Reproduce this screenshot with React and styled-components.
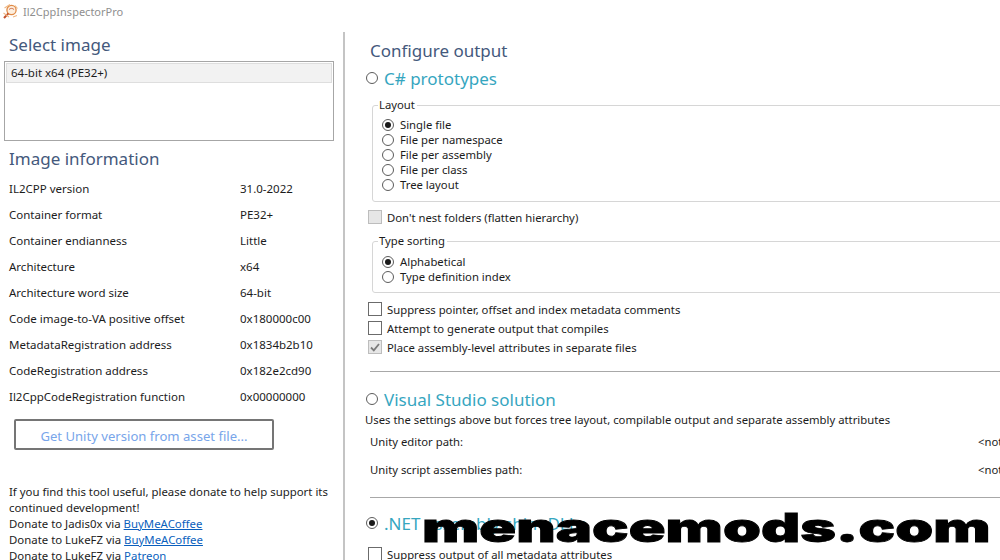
import React from "react";
import styled, { createGlobalStyle } from "styled-components";

const Global = createGlobalStyle`
  html, body { margin: 0; padding: 0; background: #fff; overflow: hidden; }
  * { box-sizing: border-box; }
  #root { width: 1000px; height: 560px; overflow: hidden; position: relative; }
`;

const Window = styled.div`
  width: 1000px; height: 560px; overflow: hidden; position: relative;
  font-family: "Noto Sans", "Open Sans", sans-serif; font-size: 11.3px; color: #1c1c1c; background: #fff;
`;
const TitleBar = styled.div`
  height: 22px; display: flex; align-items: center; gap: 4px; padding-left: 2px;
  color: #8f8f8f; font-size: 11px; white-space: nowrap;
`;
const Main = styled.div`display: flex; align-items: flex-start; height: 528px; margin-top: 10px;`;
const LeftPane = styled.div`
  flex: 0 0 345px; height: 528px; border-right: 2px solid #c4c4c4; overflow: hidden; padding-top: 1px; font-size: 11.5px;
`;
const RightPane = styled.div`flex: 0 0 800px; padding: 7px 0 0 21px; height: 528px; overflow: hidden;`;
const Heading = styled.div`
  height: 24px; line-height: 23px; font-size: 17px; color: #44597c; margin-left: ${p => p.$indent}px; margin-top: ${p => p.$top || 0}px;
`;
const ListBox = styled.div`
  margin: 4px 0 0 4px; width: 330px; height: 80px; border: 1px solid #a6a6a6; padding: 1px;
`;
const ListItem = styled.div`
  height: 20px; line-height: 18px; background: #f2f2f2; border: 1px solid #dedede; padding-left: 4px;
`;
const InfoTable = styled.div`
  margin: 4px 0 1px 9px; display: grid; grid-template-columns: 231px 1fr; grid-auto-rows: 26px; align-items: center;
`;
const AssetButton = styled.div`
  margin: 10px 0 0 14px; width: 260px; height: 31px; border: 2px solid #757575; border-radius: 2px; padding-top: 2px;
  display: flex; align-items: center; justify-content: center; color: #78a5ea; font-size: 13.1px;
`;
const Donate = styled.div`margin: 34px 0 0 9px; line-height: 16px; width: 325px; font-size: 11.4px;`;
const DonateLink = styled.span`color: #0a5fbd; text-decoration: underline;`;
const OptionRow = styled.div`
  display: flex; align-items: center; gap: 6px; height: 24px; margin: ${p => p.$top || 0}px 0 0 0; 
`;
const OptionTitle = styled.span`font-size: 17px; line-height: 23px; color: #36a6bf; white-space: nowrap;`;
const Circle = styled.span`
  flex: none; width: 12px; height: 12px; border-radius: 50%; border: 1px solid #5c5c5c; background: #fff;
  display: flex; align-items: center; justify-content: center;
  &::after { content: ""; width: 6px; height: 6px; border-radius: 50%; background: ${p => p.$on ? "#1a1a1a" : "transparent"}; }
`;
const Group = styled.fieldset`
  margin: ${p => p.$top}px 0 0 6px; width: 760px; border: 1px solid #d6d6d6; border-radius: 3px;
  padding: ${p => p.$inset}px 0 ${p => 13 - p.$inset}px 9px; min-width: 0;
`;
const GroupTitle = styled.legend`padding: 0 2px 0 1px; height: 16px; line-height: 16px; margin-left: -4px;`;
const RadioRow = styled.div`display: flex; align-items: center; gap: 6px; height: 15px;`;
const CheckRow = styled.div`
  display: flex; align-items: center; gap: 5px; height: 16px; margin: ${p => p.$top}px 0 0 2px; white-space: nowrap;
`;
const Box = styled.span`
  flex: none; width: 14px; height: 14px; border: 1px solid ${p => p.$off ? "#bdbdbd" : "#6b6b6b"};
  background: ${p => p.$off ? "#e6e6e6" : "#fff"}; display: flex; align-items: center; justify-content: center;
`;
const Rule = styled.div`height: 1px; background: #a8a8a8; margin: ${p => p.$top}px 0 0 4px; width: 700px;`;
const Note = styled.div`height: 16px; line-height: 16px; padding-top: 1px; white-space: nowrap; margin-left: -1px;`;
const PathRow = styled.div`
  display: grid; grid-template-columns: 608px 1fr; height: 28px; align-items: center; padding-left: 4px; white-space: nowrap;
`;
const Watermark = styled.div`
  position: absolute; left: 422px; top: 504px; font-family: Inter, "DejaVu Sans", sans-serif; font-weight: 900; font-size: 40px; line-height: 48px;
  color: #000; -webkit-text-stroke: 0.8px #000; white-space: nowrap; transform: scaleX(1.52); transform-origin: left top;
`;

const AppIcon = () => (
  <svg width="17" height="17" viewBox="0 0 17 17" fill="none">
    <circle cx="9.5" cy="7" r="4.6" stroke="#e08a45" strokeWidth="1.3" fill="#fdeedd" />
    <path d="M6.4 10.4 2 15" stroke="#c2512d" strokeWidth="2" />
    <path d="M2.5 5 8 1.5M1.5 10 7 14M11 14l4-1.5M13 2.5l2.5 3" stroke="#efb885" strokeWidth="1.1" />
    <path d="M7 6.5c1.5-1.5 3.5-1.5 5 0" stroke="#c2512d" strokeWidth="0.8" />
  </svg>
);
const Tick = () => (
  <svg width="12" height="12" viewBox="0 0 12 12" fill="none">
    <path d="M2 6.5 4.8 9.3 10 3" stroke="#7a7a7a" strokeWidth="1.8" />
  </svg>
);

const info = [
  ["IL2CPP version", "31.0-2022"],
  ["Container format", "PE32+"],
  ["Container endianness", "Little"],
  ["Architecture", "x64"],
  ["Architecture word size", "64-bit"],
  ["Code image-to-VA positive offset", "0x180000c00"],
  ["MetadataRegistration address", "0x1834b2b10"],
  ["CodeRegistration address", "0x182e2cd90"],
  ["Il2CppCodeRegistration function", "0x00000000"],
];
const Radio = ({ on, children }) => (
  <RadioRow><Circle $on={on} /><span>{children}</span></RadioRow>
);
const Check = ({ top, off, on, children }) => (
  <CheckRow $top={top}><Box $off={off}>{on && <Tick />}</Box><span>{children}</span></CheckRow>
);

export default function App() {
  return (
    <Window>
      <Global />
      <TitleBar><AppIcon /><span>Il2CppInspectorPro</span></TitleBar>
      <Main>
        <LeftPane>
          <Heading $indent={9}>Select image</Heading>
          <ListBox><ListItem>64-bit x64 (PE32+)</ListItem></ListBox>
          <Heading $indent={9} $top={6}>Image information</Heading>
          <InfoTable>
            {info.map(([k, v]) => (
              <React.Fragment key={k}><span>{k}</span><span>{v}</span></React.Fragment>
            ))}
          </InfoTable>
          <AssetButton>Get Unity version from asset file...</AssetButton>
          <Donate>
            If you find this tool useful, please donate to help support its continued development!<br />
            Donate to Jadis0x via <DonateLink>BuyMeACoffee</DonateLink><br />
            Donate to LukeFZ via <DonateLink>BuyMeACoffee</DonateLink><br />
            Donate to LukeFZ via <DonateLink>Patreon</DonateLink>
          </Donate>
        </LeftPane>
        <RightPane>
          <Heading $indent={4}>Configure output</Heading>
          <OptionRow $top={3}><Circle /><OptionTitle>C# prototypes</OptionTitle></OptionRow>
          <Group $top={7} $inset={4}>
            <GroupTitle>Layout</GroupTitle>
            <Radio on>Single file</Radio>
            <Radio>File per namespace</Radio>
            <Radio>File per assembly</Radio>
            <Radio>File per class</Radio>
            <Radio>Tree layout</Radio>
          </Group>
          <Check top={7} off>Don't nest folders (flatten hierarchy)</Check>
          <Group $top={8} $inset={5}>
            <GroupTitle>Type sorting</GroupTitle>
            <Radio on>Alphabetical</Radio>
            <Radio>Type definition index</Radio>
          </Group>
          <Check top={8}>Suppress pointer, offset and index metadata comments</Check>
          <Check top={3}>Attempt to generate output that compiles</Check>
          <Check top={3} off on>Place assembly-level attributes in separate files</Check>
          <Rule $top={16} />
          <OptionRow $top={15}><Circle /><OptionTitle>Visual Studio solution</OptionTitle></OptionRow>
          <Note>Uses the settings above but forces tree layout, compilable output and separate assembly attributes</Note>
          <PathRow><span>Unity editor path:</span><span>&lt;not set&gt;</span></PathRow>
          <PathRow><span>Unity script assemblies path:</span><span>&lt;not set&gt;</span></PathRow>
          <Rule $top={14} />
          <OptionRow $top={13}><Circle $on /><OptionTitle>.NET assembly shim DLLs</OptionTitle></OptionRow>
          <Check top={11}>Suppress output of all metadata attributes</Check>
        </RightPane>
      </Main>
      <Watermark>menacemods.com</Watermark>
    </Window>
  );
}
